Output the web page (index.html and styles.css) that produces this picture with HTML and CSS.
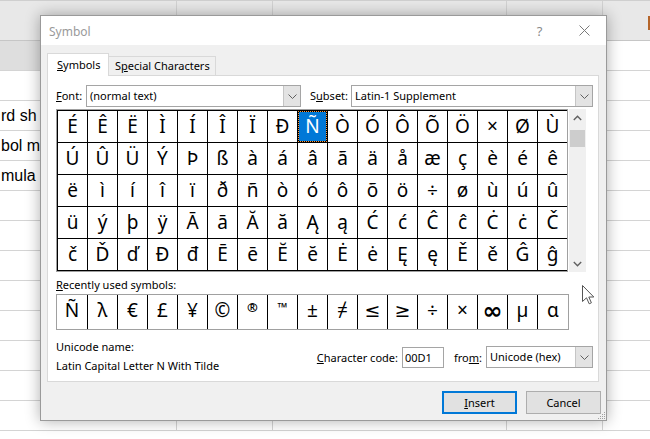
FILE: index.html
```html
<!DOCTYPE html>
<html>
<head>
<meta charset="utf-8">
<title>Symbol</title>
<link rel="stylesheet" href="styles.css">
</head>
<body>
<div class="excel">
  <div class="xrow hdr"><div class="c"></div><div class="c"></div><div class="c"></div><div class="c"></div><div class="c last"><span class="xicon"></span></div></div>
  <div class="xrow"><div class="c gray"></div><div class="c"></div><div class="c"></div><div class="c"></div><div class="c last"></div></div>
  <div class="xrow"><div class="c"></div><div class="c"></div><div class="c"></div><div class="c"></div><div class="c last"></div></div>
  <div class="xrow"><div class="c"><span class="txt">rd sh</span></div><div class="c"></div><div class="c"></div><div class="c"></div><div class="c last"></div></div>
  <div class="xrow"><div class="c"><span class="txt">bol m</span></div><div class="c"></div><div class="c"></div><div class="c"></div><div class="c last"></div></div>
  <div class="xrow"><div class="c"><span class="txt">mula</span></div><div class="c"></div><div class="c"></div><div class="c"></div><div class="c last"></div></div>
  <div class="xrow"><div class="c"></div><div class="c"></div><div class="c"></div><div class="c"></div><div class="c last"></div></div>
  <div class="xrow"><div class="c"></div><div class="c"></div><div class="c"></div><div class="c"></div><div class="c last"></div></div>
  <div class="xrow"><div class="c"></div><div class="c"></div><div class="c"></div><div class="c"></div><div class="c last"></div></div>
  <div class="xrow"><div class="c"></div><div class="c"></div><div class="c"></div><div class="c"></div><div class="c last"></div></div>
  <div class="xrow"><div class="c"></div><div class="c"></div><div class="c"></div><div class="c"></div><div class="c last"></div></div>
  <div class="xrow"><div class="c"></div><div class="c"></div><div class="c"></div><div class="c"></div><div class="c last"></div></div>
  <div class="xrow"><div class="c"></div><div class="c"></div><div class="c"></div><div class="c"></div><div class="c last"></div></div>
  <div class="xrow"><div class="c"></div><div class="c"></div><div class="c"></div><div class="c"></div><div class="c last"></div></div>
</div>

<div class="dialog">
  <div class="titlebar">
    <span class="title">Symbol</span>
    <span class="help">?</span>
    <span class="close"><svg width="11" height="11" viewBox="0 0 11 11"><path d="M0.5 0.5 L10.5 10.5 M10.5 0.5 L0.5 10.5" stroke="#7a7a7a" stroke-width="1" fill="none"/></svg></span>
  </div>
  <div class="body">
    <div class="tabs">
      <div class="tab active"><u>S</u>ymbols</div>
      <div class="tab">S<u>p</u>ecial Characters</div>
    </div>
    <div class="panel">
      <div class="fontrow">
        <span class="lbl font-lbl"><u>F</u>ont:</span>
        <div class="combo font-combo"><span class="cval">(normal text)</span><span class="dd"><svg width="9" height="5" viewBox="0 0 9 5"><path d="M0.5 0.5 L4.5 4.5 L8.5 0.5" stroke="#606060" fill="none"/></svg></span></div>
        <span class="lbl sub-lbl">S<u>u</u>bset:</span>
        <div class="combo sub-combo"><span class="cval">Latin-1 Supplement</span><span class="dd"><svg width="9" height="5" viewBox="0 0 9 5"><path d="M0.5 0.5 L4.5 4.5 L8.5 0.5" stroke="#606060" fill="none"/></svg></span></div>
      </div>
      <div class="gridwrap">
        <div class="grid">
          <span>É</span><span>Ê</span><span>Ë</span><span>Ì</span><span>Í</span><span>Î</span><span>Ï</span><span>Ð</span><span class="sel">Ñ</span><span>Ò</span><span>Ó</span><span>Ô</span><span>Õ</span><span>Ö</span><span>×</span><span>Ø</span><span>Ù</span>
          <span>Ú</span><span>Û</span><span>Ü</span><span>Ý</span><span>Þ</span><span>ß</span><span>à</span><span>á</span><span>â</span><span>ã</span><span>ä</span><span>å</span><span>æ</span><span>ç</span><span>è</span><span>é</span><span>ê</span>
          <span>ë</span><span>ì</span><span>í</span><span>î</span><span>ï</span><span>ð</span><span>ñ</span><span>ò</span><span>ó</span><span>ô</span><span>õ</span><span>ö</span><span>÷</span><span>ø</span><span>ù</span><span>ú</span><span>û</span>
          <span>ü</span><span>ý</span><span>þ</span><span>ÿ</span><span>Ā</span><span>ā</span><span>Ă</span><span>ă</span><span>Ą</span><span>ą</span><span>Ć</span><span>ć</span><span>Ĉ</span><span>ĉ</span><span>Ċ</span><span>ċ</span><span>Č</span>
          <span>č</span><span>Ď</span><span>ď</span><span>Đ</span><span>đ</span><span>Ē</span><span>ē</span><span>Ĕ</span><span>ĕ</span><span>Ė</span><span>ė</span><span>Ę</span><span>ę</span><span>Ě</span><span>ě</span><span>Ĝ</span><span>ĝ</span>
        </div>
        <div class="scroll">
          <div class="sbtn"><svg width="9" height="6" viewBox="0 0 9 6"><path d="M0.8 5 L4.5 1.3 L8.2 5" stroke="#606060" stroke-width="1.4" fill="none"/></svg></div>
          <div class="track"><div class="thumb"></div></div>
          <div class="sbtn"><svg width="9" height="6" viewBox="0 0 9 6"><path d="M0.8 1 L4.5 4.7 L8.2 1" stroke="#606060" stroke-width="1.4" fill="none"/></svg></div>
        </div>
      </div>
      <div class="lbl recent-lbl"><u>R</u>ecently used symbols:</div>
      <div class="recent">
        <span>Ñ</span><span>λ</span><span>€</span><span>£</span><span>¥</span><span>©</span><span class="small">®</span><span class="small">™</span><span>±</span><span>≠</span><span>≤</span><span>≥</span><span>÷</span><span>×</span><span class="inf">∞</span><span>µ</span><span>α</span>
      </div>
      <div class="info">
        <div class="uname">
          <div>Unicode name:</div>
          <div>Latin Capital Letter N With Tilde</div>
        </div>
        <div class="coderow">
          <span class="lbl"><u>C</u>haracter code:</span>
          <div class="input">00D1</div>
          <span class="lbl from-lbl">fro<u>m</u>:</span>
          <div class="combo from-combo"><span class="cval">Unicode (hex)</span><span class="dd"><svg width="9" height="5" viewBox="0 0 9 5"><path d="M0.5 0.5 L4.5 4.5 L8.5 0.5" stroke="#606060" fill="none"/></svg></span></div>
        </div>
      </div>
    </div>
    <div class="buttons">
      <div class="btn default"><u>I</u>nsert</div>
      <div class="btn">Cancel</div>
    </div>
  </div>
  <svg class="grip" width="9" height="9" viewBox="0 0 9 9">
    <rect x="7" y="1" width="1" height="1" fill="#a0a0a0"/>
    <rect x="5" y="3" width="1" height="1" fill="#a0a0a0"/><rect x="7" y="3" width="1" height="1" fill="#a0a0a0"/>
    <rect x="3" y="5" width="1" height="1" fill="#a0a0a0"/><rect x="5" y="5" width="1" height="1" fill="#a0a0a0"/><rect x="7" y="5" width="1" height="1" fill="#a0a0a0"/>
    <rect x="1" y="7" width="1" height="1" fill="#a0a0a0"/><rect x="3" y="7" width="1" height="1" fill="#a0a0a0"/><rect x="5" y="7" width="1" height="1" fill="#a0a0a0"/><rect x="7" y="7" width="1" height="1" fill="#a0a0a0"/>
  </svg>
</div>

<svg class="cursor" width="13" height="20" viewBox="0 0 13 20">
  <path d="M0.5 0.5 L0.5 16.5 L4.5 12.8 L7.2 18.8 L9.4 17.8 L6.8 12 L11.8 12 Z" fill="#fff" stroke="#555" stroke-width="1" stroke-linejoin="miter"/>
</svg>
</body>
</html>
```

FILE: styles.css
```css
* { box-sizing: border-box; margin: 0; padding: 0; }
html, body { width: 650px; height: 439px; overflow: hidden; }
body {
  position: relative;
  background: #fff;
  font-family: "Noto Sans", "DejaVu Sans", sans-serif;
  font-size: 11px;
  color: #000;
}
u { text-decoration: underline; text-underline-offset: 1px; }

/* Excel window behind */
.excel { position: absolute; left: 0; top: 0; width: 650px; height: 439px; overflow: hidden; }
.xrow { display: grid; grid-template-columns: 177px 96px 234px 96px 47px; height: 30px; }
.xrow .c { border-right: 1px solid #d4d4d4; border-bottom: 1px solid #d4d4d4; }
.xrow .c.last { border-right: none; }
.xrow.hdr { height: 41px; background: #e8e8e8; border-top: 1px solid #cfcfcf; }
.xrow.hdr .c { border-bottom-color: #c6c6c6; border-right-color: #d2d2d2; }
.xrow .gray { background: #dedede; }
.txt {
  display: block;
  width: 40px;
  font-family: "Liberation Sans", Arial, sans-serif;
  font-size: 16px;
  line-height: 29px;
  white-space: nowrap;
  overflow: hidden;
  padding-left: 1px;
}
.hdr .last { display: flex; align-items: center; padding-left: 45px; padding-top: 4px; }
.xicon { width: 8px; height: 14px; background: #2b4f7c; border: 1px solid #b5652a; }

/* Dialog */
.dialog {
  position: absolute;
  left: 40px; top: 15px;
  width: 567px; height: 406px;
  border: 1px solid #9a9a9a;
  background: #f0f0f0;
  box-shadow: 0 0 14px rgba(0,0,0,0.32);
  display: flex;
  flex-direction: column;
}
.titlebar {
  height: 29px;
  background: #fff;
  display: flex;
  align-items: center;
  padding-left: 8px;
  font-size: 12px;
  color: #9a9a9a;
}
.title { flex: 1; padding-top: 1px; }
.help { width: 45px; text-align: center; font-size: 13px; color: #8a8a8a; }
.close { width: 44px; display: flex; justify-content: center; align-items: center; }

.body { flex: 1; padding: 8px 5px 0 6px; display: flex; flex-direction: column; }
.tabs { display: flex; align-items: flex-end; height: 22px; }
.tab {
  height: 19px;
  border: 1px solid #d9d9d9;
  border-bottom: none;
  background: #f0f0f0;
  padding-left: 6px;
  line-height: 18px;
  width: 108px;
  margin-left: -1px;
}
.tab.active {
  position: relative;
  z-index: 1;
  height: 23px;
  width: 62px;
  margin-left: 0;
  margin-bottom: -1px;
  background: #fff;
  padding-left: 9px;
  line-height: 21px;
}
.panel {
  width: 552px;
  height: 307px;
  border: 1px solid #d9d9d9;
  background: #fff;
  padding: 9px 5px 0 8px;
  overflow: hidden;
}
.fontrow { display: flex; align-items: center; height: 22px; }
.font-lbl { width: 30px; padding-bottom: 1px; }
.sub-lbl { width: 41px; margin-left: 9px; padding-bottom: 1px; }
.combo {
  height: 22px;
  border: 1px solid #a5a5a5;
  background: #fff;
  display: flex;
  align-items: stretch;
}
.cval { flex: 1; padding-left: 3px; line-height: 19px; white-space: nowrap; }
.dd {
  width: 17px;
  background: #e3e3e3;
  border-left: 1px solid #c5c5c5;
  display: flex;
  align-items: center;
  justify-content: center;
}
.font-combo { width: 215px; }
.sub-combo { width: 242px; }

.gridwrap { margin-top: 2px; display: flex; height: 163px; }
.grid {
  width: 512px;
  border: 1px solid #a0a0a0;
  background: #000;
  padding: 1px 0 1px 1px;
  display: grid;
  grid-template-columns: repeat(17, 29px);
  grid-auto-rows: 31px;
  gap: 1px;
}
.grid span, .recent span {
  background: #fff;
  display: flex;
  align-items: center;
  justify-content: center;
  font-size: 19px;
  line-height: 1;
}
.grid span.sel {
  background: #0078d7;
  color: #fff;
  box-shadow: inset 0 0 0 1px #000;
  outline: 1px dotted #ff9a3c;
  outline-offset: -1px;
}
.scroll {
  width: 17px;
  margin-left: 1px;
  background: #f0f0f0;
  display: flex;
  flex-direction: column;
}
.sbtn { height: 17px; display: flex; align-items: center; justify-content: center; }
.track { flex: 1; padding: 4px 1px 0 1px; }
.thumb { height: 17px; background: #cdcdcd; }

.recent-lbl { margin-top: 6px; line-height: 14px; }
.recent {
  margin-top: 2px;
  width: 513px;
  height: 36px;
  border: 1px solid #a0a0a0;
  display: flex;
}
.recent span { width: 30px; border-left: 1px solid #000; padding-bottom: 4px; }
.recent span:first-child { border-left: none; }
.recent span:last-child { flex: 1; }
.recent span.small { font-size: 13px; padding-bottom: 10px; font-weight: bold; }
.recent span.inf { font-size: 24px; font-weight: bold; }

.info { margin-top: 7px; display: flex; justify-content: space-between; }
.uname { line-height: 19px; }
.coderow { margin-top: 9px; display: flex; align-items: center; height: 22px; }
.input {
  margin-left: 4px;
  width: 42px;
  height: 21px;
  border: 1px solid #a5a5a5;
  padding-left: 2px;
  line-height: 19px;
}
.from-lbl { margin-left: 10px; }
.from-combo { margin-left: 4px; width: 107px; }

.buttons { margin-top: 9px; display: flex; justify-content: flex-end; gap: 9px; }
.btn {
  width: 75px;
  height: 23px;
  background: #e1e1e1;
  border: 1px solid #adadad;
  display: flex;
  align-items: center;
  justify-content: center;
  font-size: 11px;
}
.btn.default { border: 2px solid #0078d7; }

.grip { position: absolute; right: 0; bottom: 0; }
.cursor { position: absolute; left: 582px; top: 285px; }
```
